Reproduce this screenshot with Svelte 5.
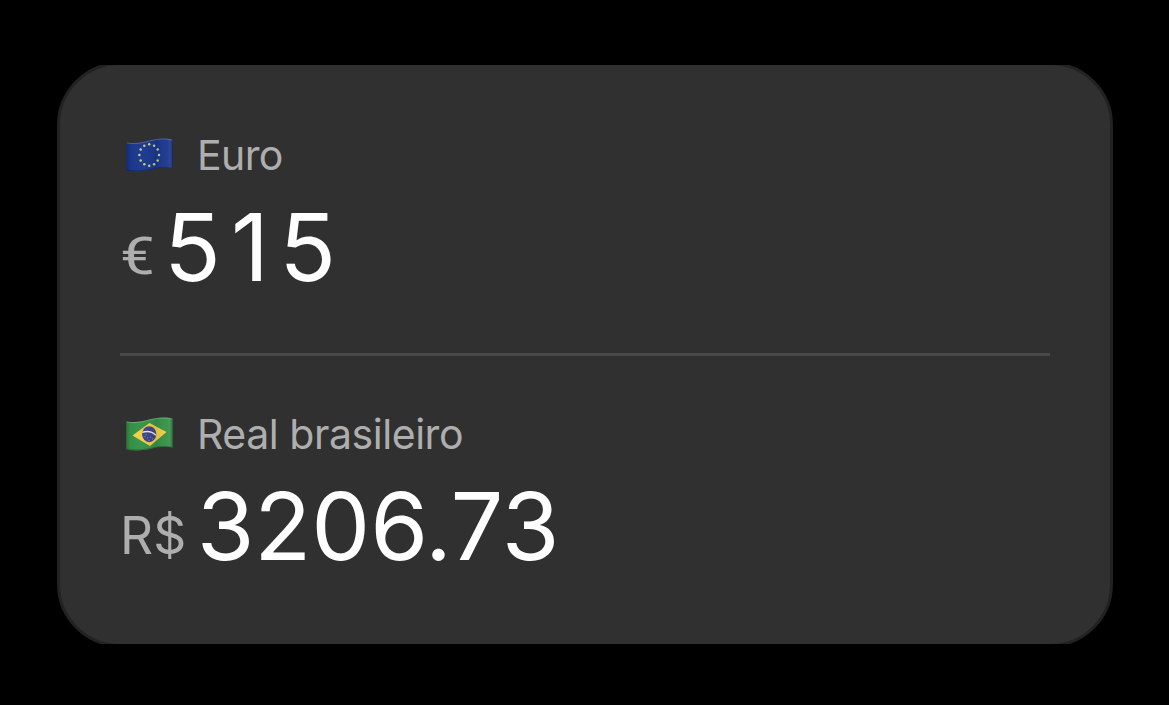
<script lang="ts">
	type Row = {
		flag: 'eu' | 'br';
		name: string;
		symbol: string;
		amount: string;
	};

	const rows: Row[] = [
		{ flag: 'eu', name: 'Euro', symbol: '€', amount: '515' },
		{ flag: 'br', name: 'Real brasileiro', symbol: 'R$', amount: '3206.73' }
	];

	const stars = Array.from({ length: 12 }, (_, i) => {
		const angle = (i * Math.PI) / 6;
		return { x: 23.2 + 9.8 * Math.sin(angle), y: 17 - 10.8 * Math.cos(angle) };
	});

	const cloth = 'M.3 4.2C7 6 15 4.8 24 2.3C33 .2 41 -.1 46.8 1.7V30.8C40 29 33 29.7 24 31.9C15 33.6 7 34 .3 32.4Z';
</script>

<main class="page">
	<section class="card">
		{#each rows as row}
			<div class="currency currency--{row.flag}">
				<div class="currency__label">
					<svg class="flag" viewBox="0 0 47 34" aria-hidden="true">
						<defs>
							<linearGradient id="shade-{row.flag}" x1="0" x2="1" y1="0" y2="0">
								<stop offset="0" stop-color="#000" stop-opacity=".2" />
								<stop offset=".08" stop-color="#000" stop-opacity=".04" />
								<stop offset=".25" stop-color="#fff" stop-opacity=".02" />
								<stop offset=".65" stop-color="#000" stop-opacity=".08" />
								<stop offset=".9" stop-color="#fff" stop-opacity=".04" />
								<stop offset="1" stop-color="#000" stop-opacity=".32" />
							</linearGradient>
						</defs>
						{#if row.flag === 'eu'}
							<path d={cloth} fill="#1a378e" />
							{#each stars as star}
								<circle cx={star.x} cy={star.y} r="1.25" fill="#c5cd8c" />
							{/each}
						{:else}
							<path d={cloth} fill="#369348" />
							<path d="M6.5 18.5L23.5 6L40.5 15L24 29Z" fill="#f4cf43" />
							<ellipse cx="23.2" cy="17.2" rx="7.1" ry="8" fill="#3b4288" />
							<path d="M16.3 15.4Q24 12.8 30 18.2" fill="none" stroke="#dce8e7" stroke-width="1.5" />
							<path d="M18.5 19.5h1M21 21h1M24 20h1M26 22h1M22.5 23.5h1M19.6 17.6h1" stroke="#9aa0cb" stroke-width=".8" />
						{/if}
						<path d={cloth} fill="url(#shade-{row.flag})" />
						<path d="M.8 4.8C7 6.5 15 5.3 24 2.8C33 .7 41 .4 46.5 2.2" fill="none" stroke="#fff" stroke-opacity=".2" />
						<path d="M.8 31.8C7 33.5 15 33.1 24 31.4C33 29.2 40 28.5 46.5 30.3" fill="none" stroke="#000" stroke-opacity=".22" />
					</svg>
					<span class="currency__name">{row.name}</span>
				</div>
				<div class="currency__value">
					<span class="currency__symbol">{row.symbol}</span>
					<span class="currency__amount">{row.amount}</span>
				</div>
			</div>
		{/each}
	</section>
</main>

<style>
	:global(body) {
		background: #000;
	}

	.page {
		box-sizing: border-box;
		width: 1169px;
		height: 705px;
		padding: 62px 56px 58px 57px;
		overflow: hidden;
		background: #000;
		font-family: Inter, 'Liberation Sans', sans-serif;
	}

	/* the hairline only shows on the sides and round the corners */
	.card {
		box-sizing: border-box;
		height: 585px;
		padding: 65px 60px;
		border: 3px solid #222;
		border-radius: 63px;
		background: #303030;
		clip-path: inset(3px 0);
	}

	.currency + .currency {
		margin-top: 56px;
		padding-top: 53px;
		border-top: 3px solid #484848;
	}

	.currency__label {
		display: flex;
		height: 50px;
		align-items: center;
		padding-left: 6px;
		color: #aeaeae;
		font-size: 41px;
		line-height: 50px;
	}

	.flag {
		width: 47px;
		height: 34px;
		margin-right: 24px;
	}

	.currency__name {
		letter-spacing: -0.6px;
	}

	.currency--br .currency__name {
		letter-spacing: -0.45px;
	}

	.currency__value {
		display: flex;
		height: 100px;
		align-items: center;
		margin-top: 17px;
		line-height: 100px;
		white-space: nowrap;
	}

	.currency__symbol {
		margin-top: 17px;
		color: #aeaeae;
		font-size: 51.5px;
	}

	.currency--eu .currency__symbol {
		font-family: Roboto, sans-serif;
		font-size: 52.5px;
		transform: scaleX(1.18);
		transform-origin: left;
	}

	.currency__amount {
		margin-left: 10.5px;
		color: #fff;
		font-size: 93.5px;
		letter-spacing: -0.1px;
	}

	.currency--eu .currency__amount {
		margin-left: 14.5px;
		letter-spacing: 10.2px;
	}
</style>
